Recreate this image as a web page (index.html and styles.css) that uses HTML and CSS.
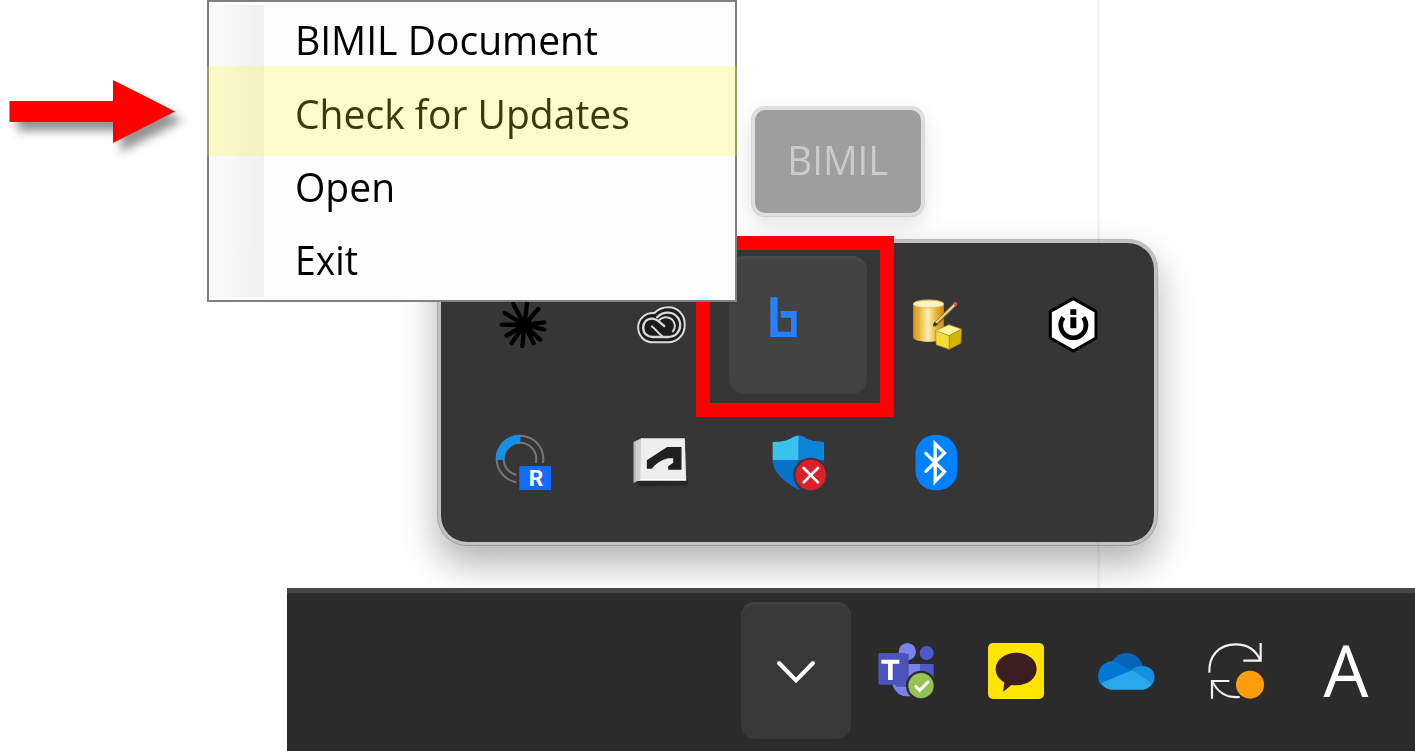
FILE: index.html
```html
<!DOCTYPE html>
<html lang="en">
<head>
<meta charset="utf-8">
<title>BIMIL tray menu</title>
<link rel="stylesheet" href="styles.css">
</head>
<body>
<main class="desktop">
  <div class="window-edge"></div>

  <section class="tray">
    <div class="cell"><svg class="icon" viewBox="39 15 180 180"><g stroke="#000" stroke-width="13" stroke-linecap="round"><path d="M133 105L100 42M133 105L141 40M133 105L175 57M133 105L193 97M133 105L193 119M133 105L180 149M133 105L161 160M133 105L127 168M133 105L95 159M133 105L80 137M133 105L65 104M133 105L74 69"/></g><circle cx="133" cy="105" r="23"/></svg></div>
    <div class="cell"><svg class="icon" viewBox="451.5 15 180 180"><path d="M522 69C544 46 582 46 600 68C618 88 616 122 600 140C590 152 576 157 562 157H518C491 157 473 137 473 112C473 86 495 67 522 69Z" fill="#1c1c1c" stroke="#dcdcdc" stroke-width="6"/><path d="M551 108C538 98 530 86 514 86C498 86 488 98 488 113C488 130 500 141 516 141H562C586 141 599 125 599 105C599 84 583 68 562 68C548 68 538 73 530 82" fill="none" stroke="#d8d8d8" stroke-width="7" stroke-linecap="round"/><path d="M514 109C524 115 532 130 545 138M536 90C546 80 562 79 573 87C586 98 586 114 577 124" fill="none" stroke="#d8d8d8" stroke-width="6" stroke-linecap="round"/></svg></div>
    <div class="cell active"><svg class="icon" viewBox="234 210 180 180"><path d="M241 217H263V320H303V278H272V258H320V336H241Z" fill="#2680ff"/></svg></div>
    <div class="cell"><svg class="icon" viewBox="46.5 45 180 180">
      <defs><linearGradient id="gold"><stop offset="0" stop-color="#d99a1c"/><stop offset=".18" stop-color="#e9b033"/><stop offset=".48" stop-color="#fff0b8"/><stop offset=".78" stop-color="#e5ad2e"/><stop offset="1" stop-color="#c88a12"/></linearGradient></defs>
      <path d="M68 72V172C68 190 160 190 160 172V72Z" fill="url(#gold)"/><ellipse cx="114" cy="72" rx="46" ry="12" fill="#fff3c4" stroke="#e5b84c" stroke-width="3"/>
      <path d="M131 136L196 71" stroke="#735326" stroke-width="11"/><path d="M136 129L193 74" stroke="#edcb80" stroke-width="7"/><path d="M127 140L132 125L142 134Z" fill="#333"/><path d="M190 69L197 67L200 72L194 79Z" fill="#d65b54" stroke="#d65b54" stroke-width="3"/>
      <path d="M135 152L175 134L213 147L176 167Z" fill="#fff49a"/><path d="M135 152L176 167V208L137 194Z" fill="#f3dd36"/><path d="M213 147L176 167V208L211 190Z" fill="#d3b60d"/><path d="M135 152L175 134L213 147L211 190L176 208L137 194ZM135 152L176 167L213 147M176 167V208" fill="none" stroke="#a88d08" stroke-width="2"/></svg></div>
    <div class="cell"><svg class="icon" viewBox="459 45 180 180"><path d="M550 56L618 94V174L550 213L481 174V94Z" fill="#fff" stroke="#000" stroke-width="9" stroke-linejoin="round"/><path d="M520 112A38 38 0 1 0 580 112" fill="none" stroke="#000" stroke-width="14"/><path d="M541 88H559V105H541ZM541 112H559V145H541Z"/></svg></div>

    <div class="cell"><svg class="icon" viewBox="39 39 180 180"><circle cx="120" cy="117" r="70" fill="none" stroke="#777" stroke-width="6"/><circle cx="120" cy="117" r="49" fill="none" stroke="#777" stroke-width="6"/><path d="M60 120A60 60 0 0 1 121 57" fill="none" stroke="#1590e8" stroke-width="25"/><path d="M109 129H220V219H109Z" fill="#363636"/><path d="M118 138H213V210H118Z" fill="#146cff"/><text class="badge-letter" x="146" y="199">R</text></svg></div>
    <div class="cell"><svg class="icon" viewBox="451.5 39 180 180"><path d="M465 184L490 176H620L624 196L480 200Z" fill="#262626"/><path d="M459 66L486 54V176L459 189Z" fill="#b9b9b9"/><path d="M466 63L486 54V176L466 184Z" fill="#d0d0d0"/><path d="M482 55H613L617 177H480Z" fill="#eee"/><path d="M482 177H617V182H470Z" fill="#fff"/><path d="M499 121L560 81H603V149H563V139L578 128V115H563C543 120 529 129 514 146H499Z" fill="#202020"/></svg></div>
    <div class="cell"><svg class="icon" viewBox="54 39 180 180"><path d="M68 66C99 66 112 62 128 52Q145 41 162 52C178 62 190 66 221 66V120H68Z" fill="#38c2ee"/><path d="M145 46Q154 46 162 52C178 62 190 66 221 66V120H145Z" fill="#0b83d8"/><path d="M68 120H145V209C105 188 68 158 68 120Z" fill="#0871c8"/><path d="M145 120H221C221 158 183 190 145 209Z" fill="#075bb5"/><circle cx="182" cy="165" r="52" fill="#363636"/><circle cx="182" cy="165" r="46" fill="#dc2029"/><path d="M161 144L204 187M204 144L161 187" stroke="#fff" stroke-width="8" stroke-linecap="round"/></svg></div>
    <div class="cell"><svg class="icon" viewBox="466.5 39 180 180"><rect x="495" y="45" width="125" height="166" rx="58" fill="#0082ff"/><path d="M526 100L582 155L554 184V71L582 99L526 154" fill="none" stroke="#fff" stroke-width="10" stroke-linecap="round"/></svg></div>
  </section>

  <div class="tooltip"><span class="tooltip-text">BIMIL</span></div>
  <div class="focus-frame"></div>

  <nav class="menu">
    <a class="menu-item"><span class="label">BIMIL Document</span></a>
    <a class="menu-item"><span class="label">Check for Updates</span></a>
    <a class="menu-item"><span class="label">Open</span></a>
    <a class="menu-item"><span class="label label-exit">Exit</span></a>
    <div class="highlight"></div>
  </nav>

  <svg class="arrow" viewBox="0 0 200 90"><path d="M9.5 31H113V10L175 41.5L113 73V52H9.5Z" fill="#f00"/></svg>

  <footer class="taskbar">
    <div class="slot open"><svg class="icon" viewBox="108 153 180 180"><path d="M147 219L198 271L249 219" fill="none" stroke="#fff" stroke-width="12" stroke-linecap="round"/></svg></div>
    <div class="slot"><svg class="icon" viewBox="438 153 180 180"><circle cx="532" cy="185" r="26" fill="#7b83eb"/><circle cx="590" cy="189" r="21" fill="#5059c9"/><path d="M568 222H611V270H568Z" fill="#5059c9"/><path d="M488 222H570V275Q565 319 532 319Q500 318 488 287Z" fill="#7b83eb"/><path d="M528 192H536V290H500L495 284H528Z" fill="#4b54ad"/><rect x="445" y="189" width="84" height="95" rx="5" fill="#4b53bc"/><path d="M454 209H508V221H488V270H474V221H454Z" fill="#fff"/><circle cx="573" cy="287" r="45" fill="#2b2b2b"/><circle cx="573" cy="287" r="38" fill="#92c353"/><path d="M557 289L569 301L594 276" fill="none" stroke="#fff" stroke-width="9" stroke-linecap="round"/></svg></div>
    <div class="slot"><svg class="icon" viewBox="48 33 180 180"><rect x="54" y="39" width="168" height="168" rx="15" fill="#ffe400"/><path d="M139 68C173 68 200 89 200 117C200 145 173 166 139 166Q131 166 124 165L99 186L103 157C87 148 77 134 77 117C77 89 105 68 139 68Z" fill="#3c1e1e"/></svg></div>
    <div class="slot"><svg class="icon" viewBox="378 33 180 180"><path d="M424 96Q442 69 470 69Q506 70 519 108L500 140L450 135Z" fill="#0364b8"/><path d="M387 155C378 126 394 95 427 94Q438 94 448 101L488 124L420 176Q395 172 387 155Z" fill="#0078d4"/><path d="M484 121Q496 108 520 108C558 111 562 153 540 170Z" fill="#1490df"/><path d="M393 159L486 121L545 160Q537 178 521 179H423Q405 178 393 159Z" fill="#28a8ea"/></svg></div>
    <div class="slot"><svg class="icon" viewBox="48 33 180 180"><path d="M58 128C56 78 86 43 137 43C170 43 197 60 211 90M212 39V92H160M118 153H66V206M68 155C82 187 111 204 149 201" fill="none" stroke="#f2f2f2" stroke-width="6.5"/><circle cx="180" cy="164" r="42" fill="#ff9d0a"/></svg></div>
    <div class="slot"><span class="ime">A</span></div>
  </footer>
</main>
</body>
</html>
```
FILE: styles.css
```css
* { box-sizing: border-box; }

body {
  margin: 0;
  background: #fff;
  font-family: "Open Sans", "Noto Sans", sans-serif;
}

.desktop {
  position: relative;
  width: 1415px;
  height: 751px;
  overflow: hidden;
}

.window-edge {
  position: absolute;
  left: 1097px;
  top: 0;
  width: 3px;
  height: 588px;
  background: #f5f5f5;
}

.icon {
  display: block;
  width: 60px;
  height: 60px;
}

.tray {
  position: absolute;
  left: 437px;
  top: 239px;
  width: 721px;
  height: 307px;
  padding: 13px;
  border: 4px solid rgba(80, 80, 80, .35);
  border-radius: 30px;
  background: #363636;
  background-clip: padding-box;
  box-shadow: 0 18px 36px rgba(0, 0, 0, .3);
  display: grid;
  grid-template-columns: 138px 137px 138px 137px 138px;
  grid-template-rows: 138px 138px;
}

.cell, .slot {
  display: flex;
  align-items: center;
  justify-content: center;
}

.active {
  border-radius: 15px;
  background: #424242;
  box-shadow: inset 0 4px 2px -1px #4a4a4a;
}

.badge-letter {
  font: 700 68px Roboto, "Open Sans", sans-serif;
  fill: #fff;
}

.tooltip {
  position: absolute;
  left: 751px;
  top: 106px;
  width: 174px;
  height: 111px;
  border: 4px solid rgba(120, 120, 120, .24);
  border-radius: 14px;
  background: #9e9e9e;
  background-clip: padding-box;
  box-shadow: 0 8px 20px rgba(0, 0, 0, .11);
  color: #cbcbcb;
  font-size: 41px;
  font-weight: 500;
  line-height: 99px;
  display: flex;
  justify-content: center;
}

.tooltip-text { transform: scaleX(.94); }

.focus-frame {
  position: absolute;
  left: 696px;
  top: 236px;
  width: 198px;
  height: 181px;
  border: 14px solid #f00;
}

.menu {
  position: absolute;
  left: 207px;
  top: 0;
  width: 530px;
  height: 302px;
  padding: 1px 0 0 86px;
  border: 2px solid #808080;
  background: linear-gradient(90deg, #fbfbfb, #f0f0f0) 1px 3px / 54px 292px no-repeat, #fdfdfd;
}

.menu-item {
  display: flex;
  height: 73.4px;
  align-items: center;
  color: #000;
  font-size: 41px;
  line-height: 73px;
  white-space: nowrap;
}

.label {
  transform: scaleX(.952);
  transform-origin: left;
}

.label-exit { transform: scaleX(.91); }

.highlight {
  position: absolute;
  left: -2px;
  top: 64px;
  width: 530px;
  height: 90px;
  background: rgba(252, 252, 30, .23);
}

.arrow {
  position: absolute;
  left: 0;
  top: 70px;
  width: 200px;
  height: 90px;
  overflow: visible;
  filter: drop-shadow(8px 9px 5px rgba(0, 0, 0, .42));
}

.taskbar {
  position: absolute;
  left: 287px;
  top: 588px;
  width: 1128px;
  height: 163px;
  padding: 9px 14px 12px 0;
  border-top: 5px solid #474747;
  background: #2b2b2b;
  display: flex;
  justify-content: flex-end;
}

.slot { width: 110px; }

.open {
  border-radius: 14px;
  background: #383838;
  box-shadow: inset 0 4px 2px -1px #404040;
}

.ime {
  color: #fff;
  font-size: 71px;
  line-height: 100px;
  transform: translateY(-1px);
}
```
